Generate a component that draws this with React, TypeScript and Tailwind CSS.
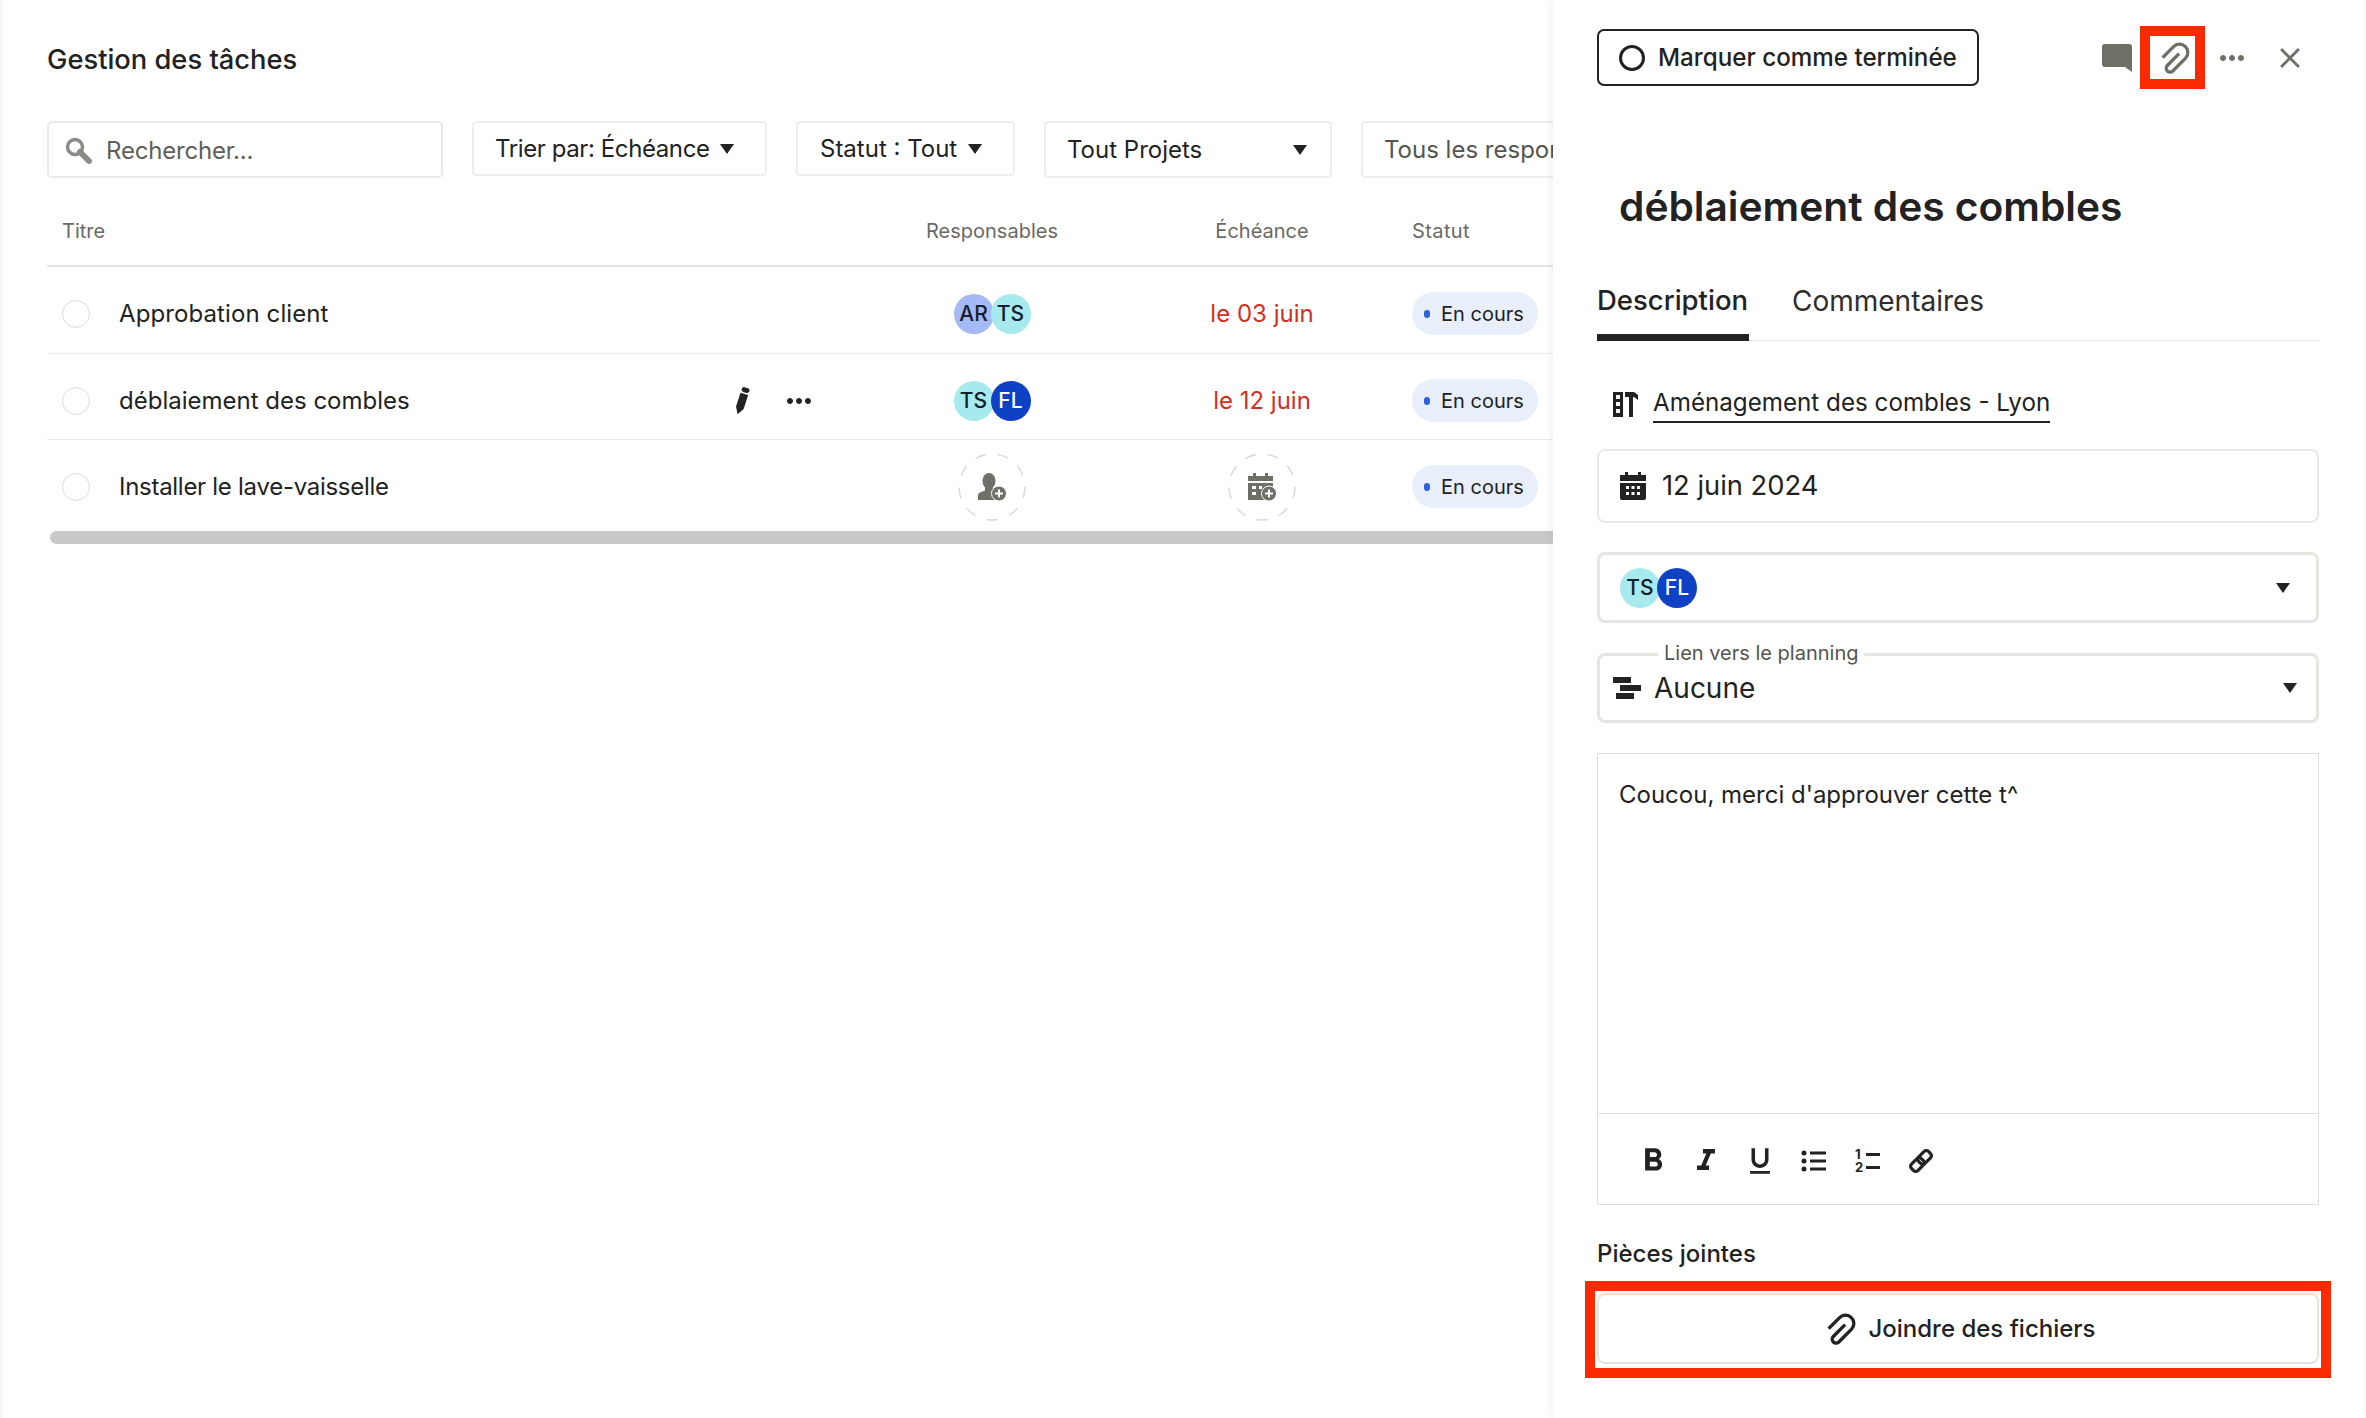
import React from 'react';
import { MdClose, MdFormatBold, MdFormatItalic, MdFormatUnderlined, MdMoreHoriz } from 'react-icons/md';

const Caret = ({ className = '' }: { className?: string }) => (
  <svg viewBox="0 0 16 10" className={`h-[10px] ${className}`}>
    <polygon points="1,0 15,0 8,10" fill="#222" />
  </svg>
);

const Avatar = ({ label, tone }: { label: string; tone: string }) => (
  <div className={`w-[40px] h-[40px] -mr-[3px] last:mr-0 rounded-full flex items-center justify-center text-[21px] font-medium ${tone}`}>
    {label}
  </div>
);

const tones: Record<string, string> = {
  AR: 'bg-[#a4b9f6] text-[#14202e]',
  TS: 'bg-[#a6eaed] text-[#14202e]',
  FL: 'bg-[#0f41c5] text-white',
};

const Avatars = ({ names }: { names: string[] }) => (
  <div className="flex">
    {names.map((n) => (
      <Avatar key={n} label={n} tone={tones[n]} />
    ))}
  </div>
);

const Pencil = () => (
  <svg viewBox="0 0 20 30" className="w-[20px] h-[30px]">
    <g transform="rotate(18 10 15)" fill="#222">
      <rect x="6" y="1" width="8" height="5" rx="3" />
      <polygon points="6,7.5 14,7.5 14,22 10,29 6,22" />
    </g>
  </svg>
);

const SearchIcon = () => (
  <svg viewBox="0 0 28 28" className="w-[28px] h-[28px]">
    <circle cx="10" cy="10" r="7.5" fill="none" stroke="#8a8a86" strokeWidth="3.5" />
    <path d="M15 15l9 9" stroke="#8a8a86" strokeWidth="6" strokeLinecap="round" />
  </svg>
);

const DashedCircle = ({ children }: { children: React.ReactNode }) => (
  <div className="relative w-[68px] h-[68px] flex items-center justify-center">
    <svg viewBox="0 0 68 68" className="absolute inset-0 w-full h-full">
      <circle cx="34" cy="34" r="33" fill="none" stroke="#dcdcd6" strokeWidth="1.6" strokeDasharray="11 12" />
    </svg>
    {children}
  </div>
);

const PersonAdd = () => (
  <svg viewBox="0 0 30 28" className="w-[30px] h-[28px]">
    <ellipse cx="12" cy="8" rx="6.5" ry="8" fill="#6f6f68" />
    <path d="M8 14h8v4l3 1.5V27H1v-5q0-2 3-3l4-1.5z" fill="#6f6f68" />
    <circle cx="22" cy="20.5" r="7.5" fill="#6f6f68" stroke="#fff" strokeWidth="1" />
    <path d="M22 16.5v8M18 20.5h8" stroke="#fff" strokeWidth="2" />
  </svg>
);

const CalendarAdd = () => (
  <svg viewBox="0 0 30 28" className="w-[30px] h-[28px]">
    <path d="M6 0h3v3h9V0h3v3h5v5H1V3h5z" fill="#6f6f68" />
    <rect x="1" y="10" width="25" height="17" fill="#6f6f68" />
    <path d="M5 13h4v3H5zM5 19h4v3H5zM12 13h3v3h-3z" fill="#fff" />
    <circle cx="22" cy="20.5" r="7.5" fill="#6f6f68" stroke="#fff" strokeWidth="1" />
    <path d="M22 16.5v8M18 20.5h8" stroke="#fff" strokeWidth="2" />
  </svg>
);

const CalendarFilled = () => (
  <svg viewBox="0 0 26 28" className="w-[26px] h-[28px]">
    <path d="M5 0h3v3h10V0h3v3h5v6H0V3h5z" fill="#222" />
    <path d="M0 11h26v15a2 2 0 0 1-2 2H2a2 2 0 0 1-2-2z" fill="#222" />
    <path d="M6 14h3v3H6zM11.5 14h3v3h-3zM17 14h3v3h-3zM6 20h3v3H6zM11.5 20h3v3h-3zM17 20h3v3h-3z" fill="#fff" />
  </svg>
);

const Tools = () => (
  <svg viewBox="0 0 26 26" className="w-[26px] h-[26px]">
    <path fillRule="evenodd" d="M0 1h10v25H0zM3 4v4h4V4zM3 11v4h4v-4zM3 18v4h4v-4z" fill="#222" />
    <path d="M12 1h9l4 3v5l-4-3h-1v20h-4V6h-4z" fill="#222" />
  </svg>
);

const Gantt = () => (
  <svg viewBox="0 0 28 22" className="w-[28px] h-[22px]">
    <rect x="0" y="0" width="18" height="6" fill="#222" />
    <rect x="7" y="8" width="21" height="6" fill="#222" />
    <rect x="3" y="16" width="18" height="6" fill="#222" />
  </svg>
);

const Comment = () => (
  <svg viewBox="0 0 30 28" className="w-[30px] h-[28px]">
    <path d="M3 0h24a3 3 0 0 1 3 3v25l-7-5H3a3 3 0 0 1-3-3V3a3 3 0 0 1 3-3z" fill="#6f6f68" />
  </svg>
);

const Clip = ({ color }: { color: string }) => (
  <svg viewBox="-2 -2 36 36" className="w-[40px] h-[40px]">
    <g transform="rotate(45 16 16)">
      <path d="M8.5 23V9a7.5 7.5 0 0 1 15 0V25a3.5 3.5 0 0 1-7 0V10" fill="none" stroke={color} strokeWidth="3" />
    </g>
  </svg>
);

const BulletList = () => (
  <svg viewBox="0 0 26 24" className="w-[26px] h-[24px]">
    <circle cx="3" cy="4" r="2.5" fill="#222" />
    <circle cx="3" cy="12" r="2.5" fill="#222" />
    <circle cx="3" cy="20" r="2.5" fill="#222" />
    <path d="M9 2.5h16v3H9zM9 10.5h16v3H9zM9 18.5h16v3H9z" fill="#222" />
  </svg>
);

const NumberList = () => (
  <div className="flex flex-col w-[26px] h-[26px] text-[13px] leading-[13px] font-bold">
    <div className="flex items-center gap-[3px]">
      <span className="w-[8px]">1</span>
      <span className="w-[14px] h-[3px] bg-[#222]" />
    </div>
    <div className="flex items-center gap-[3px]">
      <span className="w-[8px]">2</span>
      <span className="w-[14px] h-[3px] bg-[#222]" />
    </div>
  </div>
);

const ChainLink = () => (
  <svg viewBox="0 0 26 26" className="w-[26px] h-[26px]">
    <g transform="rotate(-45 13 13)" fill="none" stroke="#222" strokeWidth="3.2">
      <rect x="1" y="8.5" width="14" height="9" rx="3" />
      <rect x="11" y="8.5" width="14" height="9" rx="3" />
    </g>
  </svg>
);

const Filter = ({ className, children }: { className: string; children: React.ReactNode }) => (
  <div className={`flex items-center shrink-0 rounded-[4px] border-2 border-[#eeeeea] text-[24px] text-[#222] ${className}`}>
    {children}
  </div>
);

const Row = ({ title, resp, date, actions, border, titleClass = '' }: { title: string; resp: React.ReactNode; date: React.ReactNode; actions?: boolean; border: string; titleClass?: string }) => (
  <div className={`grid grid-cols-[825px_240px_300px_200px] items-center ${border}`}>
    <div className="flex items-center pl-[15px]">
      <div className="w-[28px] h-[28px] rounded-full border border-[#dcdcd6] shrink-0" />
      <span className={`ml-[29px] text-[24px] text-[#222] whitespace-nowrap ${titleClass}`}>{title}</span>
      {actions && (
        <div className="flex items-center ml-[322px]">
          <Pencil />
          <MdMoreHoriz size={36} className="ml-[29px] text-[#222]" />
        </div>
      )}
    </div>
    <div className="flex justify-center">{resp}</div>
    <div className="flex justify-center text-[24px] text-[#d0301f]">{date}</div>
    <div>
      <div className="w-[126px] h-[43px] rounded-full bg-[#e8effb] flex items-center pl-[12px] text-[20px] text-[#222]">
        <span className="w-[6px] h-[8px] rounded-full bg-[#2e62d9] mr-[11px]" />
        En cours
      </div>
    </div>
  </div>
);

const App = () => {
  return (
    <div className="flex w-[2366px] h-[1418px] overflow-hidden bg-white text-[#222]" style={{ fontFamily: 'Inter, "Liberation Sans", sans-serif' }}>
      {/* Liste des tâches */}
      <main className="flex-1 min-w-0 overflow-hidden pl-[44px] border-l-[3px] border-[#f8f8f8]">
        <h1 className="mt-[42px] h-[36px] flex items-center text-[27.3px] font-medium">Gestion des tâches</h1>

        <div className="flex items-start mt-[43px] w-[1600px]">
          <div className="flex items-center w-[396px] h-[57px] rounded-[5px] border-2 border-[#e9e9e5] pl-[16px] pt-[2px] shrink-0 text-[24px] tracking-[-0.2px] text-[#5f5f5a]">
            <SearchIcon />
            <span className="ml-[13px]">Rechercher...</span>
          </div>
          <Filter className="ml-[29px] w-[295px] h-[55px] pl-[21px] tracking-[-0.4px]">
            Trier par: Échéance
            <Caret className="ml-[9px] w-[16px]" />
          </Filter>
          <Filter className="ml-[29px] w-[219px] h-[55px] pl-[22px]">
            Statut : Tout
            <Caret className="ml-[10px] w-[16px]" />
          </Filter>
          <Filter className="ml-[29px] w-[288px] h-[57px] pl-[21px]">
            Tout Projets
            <Caret className="ml-auto mr-[22px] w-[16px]" />
          </Filter>
          <Filter className="ml-[29px] w-[300px] h-[57px] pl-[21px] text-[#55554f]">Tous les responsables</Filter>
        </div>

        <div className="w-[1600px]">
          <div className="grid grid-cols-[825px_240px_300px_200px] items-center h-[89px] pt-[19px] border-b-2 border-[#e6e6e6] text-[20px] text-[#6a6a65]">
            <div className="pl-[15px]">Titre</div>
            <div className="text-center">Responsables</div>
            <div className="text-center">Échéance</div>
            <div className="tracking-[0.4px]">Statut</div>
          </div>
          <Row
            title="Approbation client"
            resp={<Avatars names={['AR', 'TS']} />}
            date="le 03 juin"
            titleClass="tracking-[0.1px]"
            border="h-[87px] pt-[7px] border-b border-[#ebebeb]"
          />
          <Row
            title="déblaiement des combles"
            resp={<Avatars names={['TS', 'FL']} />}
            date="le 12 juin"
            actions
            border="h-[86px] pt-[8px] border-b border-[#ebebeb]"
          />
          <Row
            title="Installer le lave-vaisselle"
            resp={
              <DashedCircle>
                <PersonAdd />
              </DashedCircle>
            }
            date={
              <DashedCircle>
                <CalendarAdd />
              </DashedCircle>
            }
            titleClass="tracking-[-0.28px]"
            border="h-[91px] pt-[2px]"
          />
          <div className="ml-[3px] h-[13px] rounded-full bg-[#c9c9c9]" />
        </div>
      </main>

      {/* Panneau de détail */}
      <aside className="relative w-[813px] shrink-0 pl-[44px] pr-[44px] border-r-[3px] border-[#f8f8f8] bg-white shadow-[-3px_0_8px_rgba(0,0,0,0.05)]">
        <div className="flex items-center mt-[29px] h-[57px]">
          <div className="flex items-center w-[382px] h-[57px] rounded-[7px] border-2 border-[#222] pl-[20px] pt-[1px] text-[24.2px] font-medium">
            <span className="w-[26px] h-[26px] rounded-full border-[3px] border-[#222]" />
            <span className="ml-[13px]">Marquer comme terminée</span>
          </div>
          <div className="ml-auto flex items-center text-[#6f6f68]">
            <div className="w-[58px] flex justify-center pl-[2px]"><Comment /></div>
            <div className="relative w-[58px] flex justify-center">
              <Clip color="#6f6f68" />
              <div className="absolute -left-[5px] -right-[2px] -top-[12px] -bottom-[11px] border-[10px] border-[#fb2a00]" />
            </div>
            <div className="w-[58px] flex justify-center"><MdMoreHoriz size={36} /></div>
            <div className="w-[58px] flex justify-center"><MdClose size={34} /></div>
          </div>
        </div>

        <h2 className="mt-[88px] h-[66px] pl-[22px] flex items-center text-[40.7px] font-semibold">déblaiement des combles</h2>

        <div className="flex h-[71px] mt-[30px] border-b border-[#e5e5e5]">
          <div className="w-[152px] h-[71px] pt-[10px] border-b-[7px] border-[#222] text-[27.5px] font-medium whitespace-nowrap">Description</div>
          <div className="ml-[43px] pt-[10px] text-[28px] text-[#2d2d2d]">Commentaires</div>
        </div>

        <div className="flex items-center mt-[43px] h-[40px] pl-[16px]">
          <Tools />
          <span className="ml-[14px] text-[24.2px] border-b-2 border-[#222]">Aménagement des combles - Lyon</span>
        </div>

        <div className="flex items-center mt-[25px] h-[74px] rounded-[8px] border-2 border-[#e8e8e4] pl-[21px]">
          <CalendarFilled />
          <span className="ml-[16px] text-[27.3px]">12 juin 2024</span>
        </div>

        <div className="flex items-center mt-[29px] h-[71px] rounded-[8px] border-[3px] border-[#e6e5df] pl-[20px] pr-[24px]">
          <Avatars names={['TS', 'FL']} />
          <Caret className="ml-auto w-[18px]" />
        </div>

        <div className="relative flex items-center mt-[30px] h-[70px] rounded-[8px] border-[3px] border-[#e6e5df] pl-[13px] pr-[17px]">
          <span className="absolute -top-[18px] left-[58px] px-[6px] bg-white text-[20px] text-[#55554f]">Lien vers le planning</span>
          <Gantt />
          <span className="ml-[13px] text-[28px]">Aucune</span>
          <Caret className="ml-auto w-[18px]" />
        </div>

        <div className="mt-[30px] h-[452px] flex flex-col border border-[#dedede]">
          <div className="flex-1 pl-[21px] pt-[23px] text-[24px]">Coucou, merci d'approuver cette t^</div>
          <div className="h-[91px] flex items-center pl-[36px] pt-[3px] border-t border-[#dedede] text-[#222]">
            <div className="w-[54px] flex justify-start"><MdFormatBold size={38} /></div>
            <div className="w-[55px] flex justify-start"><MdFormatItalic size={36} /></div>
            <div className="w-[55px] flex justify-start"><MdFormatUnderlined size={34} /></div>
            <div className="w-[54px] flex justify-start pl-[3px]"><BulletList /></div>
            <div className="w-[53px] flex justify-start pl-[3px]"><NumberList /></div>
            <div className="w-[54px] flex justify-start pl-[3px]"><ChainLink /></div>
          </div>
        </div>

        <div className="mt-[34px] h-[30px] flex items-center text-[24px] font-medium">Pièces jointes</div>

        <div className="relative mt-[24px] h-[71px] rounded-[8px] border-2 border-[#e4e3dc] flex items-center justify-center text-[24px] font-medium">
          <div className="-mr-[3px]"><Clip color="#222" /></div>
          <span className="ml-[11px]">Joindre des fichiers</span>
          <div className="absolute -left-[14px] -right-[14px] -top-[14px] -bottom-[16px] border-[10px] border-[#fb2a00]" />
        </div>
      </aside>
    </div>
  );
};

export default App;
